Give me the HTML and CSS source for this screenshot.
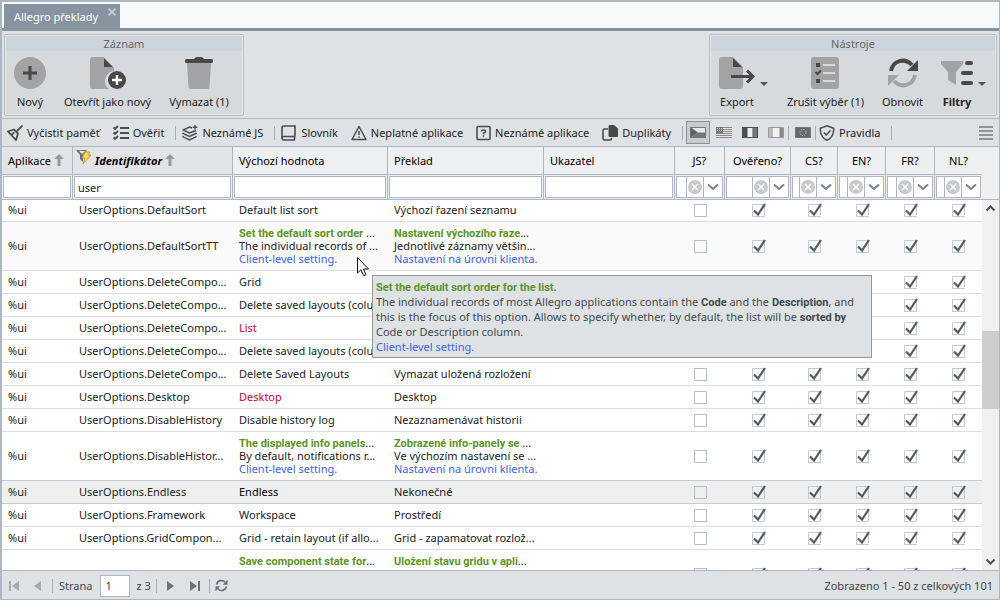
FILE: index.html
```html
<!DOCTYPE html>
<html lang="cs">
<head>
<meta charset="utf-8">
<title>Allegro překlady</title>
<link rel="stylesheet" href="styles.css">
</head>
<body>
<svg class="defs" aria-hidden="true">
  <symbol id="clear" viewBox="0 0 14 14"><circle cx="7" cy="7" r="7" fill="#c9c9c9"/><path d="M4 4l6 6M10 4l-6 6" stroke="#fff" stroke-width="1.3"/></symbol>
  <symbol id="chevron" viewBox="0 0 12 8"><path d="M1 1.500l5 4.500 5-4.500" fill="none" stroke="#7b8188" stroke-width="2"/></symbol>
  <symbol id="sort" viewBox="0 0 10 12"><path d="M5 0l5 5H6.500v7h-3V5H0z" fill="#999"/></symbol>
</svg>
<div class="app">
  <nav class="tabs">
    <div class="tab"><a href="#prehled">Allegro překlady</a>
      <button class="tab-close" aria-label="Zavřít"><svg width="8" height="8" viewBox="0 0 8 8"><path d="M.5.500l7 7M7.500.500l-7 7" stroke="#ccd3da" stroke-width="1.600"/></svg></button>
    </div>
  </nav>

  <header class="ribbon">
    <section class="group">
      <h2>Záznam</h2>
      <div class="group-items">
        <button class="big"><svg width="32" height="32" viewBox="0 0 32 32"><circle cx="16" cy="16" r="16" fill="#a2a3a4"/><path d="M16 9v14M9 16h14" stroke="#484848" stroke-width="3"/></svg><span>Nový</span></button>
        <button class="big"><svg width="36" height="32" viewBox="0 0 36 32"><path d="M3 0h11v10h10v4a10 10 0 0 0-5 18H3q-3 0-3-3V3q0-3 3-3z" fill="#a2a3a4"/><path d="M14 1l9 9h-9z" fill="#484848"/><circle cx="27" cy="23" r="9" fill="#484848"/><path d="M27 18v10M22 23h10" stroke="#fff" stroke-width="2.400"/></svg><span>Otevřít jako nový</span></button>
        <button class="big"><svg width="28" height="32" viewBox="0 0 28 32"><path d="M2 6h24l-1.500 24q-.2 2-2 2h-17q-1.800 0-2-2z" fill="#a2a3a4"/><path d="M1 2h8q1-2 3-2h4q2 0 3 2h8q1 0 1 2t-1 2H1Q0 6 0 4t1-2z" fill="#484848"/></svg><span>Vymazat (1)</span></button>
      </div>
    </section>
    <section class="group">
      <h2>Nástroje</h2>
      <div class="group-items">
        <button class="big menu"><svg width="36" height="32" viewBox="0 0 36 32"><path d="M3 0h11l10 10v19q0 3-3 3H3q-3 0-3-3V3q0-3 3-3z" fill="#a2a3a4"/><path d="M14 1l9 9h-9z" fill="#484848"/><path d="M12 19.500h21M28 13.500l6 6-6 6" fill="none" stroke="#484848" stroke-width="3"/></svg><span>Export</span></button>
        <button class="big"><svg width="28" height="32" viewBox="0 0 28 32"><rect width="28" height="32" rx="3" fill="#a2a3a4"/><path d="M12 8h12M12 16h12M12 24h12" stroke="#d7dadd" stroke-width="2"/><path d="M5 6h4v4H5zM5 22h4v4H5z" fill="#484848"/><path d="M4.500 15l2 2 3.500-3.500" fill="none" stroke="#484848" stroke-width="2"/></svg><span>Zrušit výběr (1)</span></button>
        <button class="big"><svg width="32" height="32" viewBox="0 0 32 32"><path d="M4 14C6 3 18 .5 25 8" fill="none" stroke="#484848" stroke-width="4"/><path d="M31 3v11H20z" fill="#484848"/><path d="M28 18c-2 11-14 13.500-21 6" fill="none" stroke="#a2a3a4" stroke-width="4"/><path d="M1 29V18h11z" fill="#a2a3a4"/></svg><span>Obnovit</span></button>
        <button class="big menu bold"><svg width="32" height="32" viewBox="0 0 32 32"><path d="M0 4h22v3l-7 8v13l-8-5v-8L0 7z" fill="#a2a3a4"/><path d="M26 6h4M22 16h8M22 26h8" stroke="#484848" stroke-width="4" stroke-linecap="round"/></svg><span>Filtry</span></button>
      </div>
    </section>
  </header>

  <div class="toolbar">
    <button class="tool"><svg width="16" height="16" viewBox="0 0 16 16" fill="none" stroke="#4c4c4c" stroke-width="1.800"><path d="M15.500.500L10 6M1 6.500l6-2 4 4-2 6.500zM4.500 9.500l3-2"/></svg>Vyčistit paměť</button>
    <button class="tool"><svg width="16" height="16" viewBox="0 0 16 16" fill="none" stroke="#4c4c4c" stroke-width="1.800"><path d="M7 3h9M7 8h9M7 13h9M.5 2.500L2 4l3-3M.5 7.500L2 9l3-3M.5 12.500L2 14l3-3"/></svg>Ověřit</button>
    <i class="sep"></i>
    <button class="tool"><svg width="16" height="16" viewBox="0 0 16 16" fill="none" stroke="#4c4c4c" stroke-width="1.400"><path d="M10 3L7.500 2 1 5l6.500 3L14 5.500M1.500 8L1 8.500l6.500 3 6.500-3-.5-.5M1.500 11l-.5.800L7.500 15l6.500-3.200-.5-.800M13 0v4.500M10.800 2.300h4.500"/></svg>Neznámé JS</button>
    <i class="sep"></i>
    <button class="tool"><svg width="16" height="16" viewBox="0 0 16 16" fill="none" stroke="#4c4c4c" stroke-width="1.600"><path d="M14 11.500V1H3Q1 1 1 3v10q0 2 2 2h11M14 11.500H3q-2 0-2 1.500M13.500 11.500V15"/></svg>Slovník</button>
    <button class="tool"><svg width="16" height="16" viewBox="0 0 16 16" fill="none" stroke="#4c4c4c" stroke-width="1.500" stroke-linejoin="round"><path d="M8 1.500l7 13H1zM8 6v4M8 11.300v1.500"/></svg>Neplatné aplikace</button>
    <button class="tool"><svg width="15" height="16" viewBox="0 0 15 16" fill="none" stroke="#4c4c4c" stroke-width="1.600"><rect x="1" y="1.500" width="13" height="13" rx="1"/><path d="M5.500 6.500Q5.500 5 7.500 5t2 1.500Q9.500 7.500 7.500 8.300v1M7.500 10.300v1.500"/></svg>Neznámé aplikace</button>
    <button class="tool"><svg width="16" height="16" viewBox="0 0 16 16"><path d="M6 4H2.500Q1 4 1 5.500v8Q1 15 2.500 15H8q1.500 0 1.500-2" fill="none" stroke="#4c4c4c" stroke-width="1.600"/><path d="M8 0h4l4 3.500V11q0 1-1 1H8q-1.500 0-1.500-1V1.500Q6.500 0 8 0z" fill="#484848"/></svg>Duplikáty</button>
    <i class="sep"></i>
    <button class="flag on" aria-label="Čeština" aria-pressed="true"><svg width="16" height="11" viewBox="0 0 16 11"><path d="M0 0h16v6H8z" fill="#e8e8e8"/><path d="M0 0l8 5.500L0 11z" fill="#606060"/><path d="M0 11l8-5.500h8V11z" fill="#777"/><path d="M.5.500h15v10H.5z" fill="none" stroke="#777"/></svg></button>
    <button class="flag" aria-label="Angličtina"><svg width="16" height="11" viewBox="0 0 16 11"><path d="M0 0h16v11H0z" fill="#e8e8e8"/><path d="M0 .5h16M0 2.500h16M0 4.500h16M0 6.500h16M0 8.500h16M0 10.500h16" stroke="#888"/><path d="M0 0h7v6H0z" fill="#777"/><path d="M1 1.500h6M1 3.500h6" stroke="#ccc" stroke-dasharray="1 1"/></svg></button>
    <button class="flag" aria-label="Francouzština"><svg width="16" height="11" viewBox="0 0 16 11"><path d="M0 0h16v11H0z" fill="#4f4f4f"/><path d="M5.500 1h5v9h-5z" fill="#eee"/><path d="M11 1h4v9h-4z" fill="#777"/></svg></button>
    <button class="flag" aria-label="Nizozemština"><svg width="16" height="11" viewBox="0 0 16 11"><path d="M.5.500h15v10H.5z" fill="#bbb" stroke="#999"/><path d="M5 1h6v9H5z" fill="#f2f2f2"/><path d="M12 1h3v9h-3z" fill="#888"/></svg></button>
    <i class="sep flag-sep"></i>
    <button class="flag" aria-label="Evropská unie"><svg width="16" height="11" viewBox="0 0 16 11"><path d="M.5.500h15v10H.5z" fill="#686868" stroke="#777"/><circle cx="8" cy="5.500" r="3" fill="none" stroke="#ddd" stroke-dasharray="1 1.350"/></svg></button>
    <i class="sep flag-sep"></i>
    <button class="tool"><svg width="16" height="16" viewBox="0 0 16 16" fill="none" stroke="#4c4c4c" stroke-width="1.500"><path d="M8 .8l6.700 2.500q.3 9-6.700 12-7-3-6.700-12zM4.800 7.500L7.200 10l4.300-4.500"/></svg>Pravidla</button>
    <i class="sep"></i>
    <button class="more" aria-label="Nabídka"><svg width="14" height="14" viewBox="0 0 14 14"><path d="M0 1h14M0 5h14M0 9h14M0 13h14" stroke="#929292" stroke-width="2"/></svg></button>
  </div>

  <div class="grid-head">
    <table class="grid">
      <colgroup><col class="w-app"><col class="w-id"><col class="w-val"><col class="w-tr"><col><col class="w-js"><col class="w-ok"><col class="w-cs"><col class="w-en"><col class="w-fr"><col class="w-nl"></colgroup>
      <thead>
        <tr class="titles">
          <th class="sorted">Aplikace <svg class="arrow" width="10" height="12"><use href="#sort"/></svg></th>
          <th class="sorted ident"><svg class="funnel" width="16" height="16" viewBox="0 0 16 16"><path d="M0 1h11L7 6v7l-3-3V6z" fill="#65717c"/><path d="M3 2h6L6 5z" fill="#e9edf0"/><path d="M9 3h5l-2 3h3l-8 9 2-6H6z" fill="#ffd951" stroke="#c48b18" stroke-width=".8"/></svg><em>Identifikátor</em> <svg class="arrow" width="10" height="12"><use href="#sort"/></svg></th>
          <th>Výchozí hodnota</th><th>Překlad</th><th>Ukazatel</th>
          <th class="c">JS?</th><th class="c">Ověřeno?</th><th class="c">CS?</th><th class="c">EN?</th><th class="c">FR?</th><th class="c">NL?</th>
        </tr>
        <tr class="filters">
          <td><input class="box" aria-label="Filtr Aplikace"></td>
          <td><input class="box" aria-label="Filtr Identifikátor" value="user"></td>
          <td><input class="box" aria-label="Filtr Výchozí hodnota"></td>
          <td><input class="box" aria-label="Filtr Překlad"></td>
          <td><input class="box" aria-label="Filtr Ukazatel"></td>
          <td><div class="combo"><input aria-label="Filtr JS"><button aria-label="Vymazat filtr JS"><svg width="14" height="14"><use href="#clear"/></svg></button><button aria-label="Vybrat JS"><svg width="12" height="8"><use href="#chevron"/></svg></button></div></td>
          <td><div class="combo"><input aria-label="Filtr Ověřeno"><button aria-label="Vymazat filtr Ověřeno"><svg width="14" height="14"><use href="#clear"/></svg></button><button aria-label="Vybrat Ověřeno"><svg width="12" height="8"><use href="#chevron"/></svg></button></div></td>
          <td><div class="combo"><input aria-label="Filtr CS"><button aria-label="Vymazat filtr CS"><svg width="14" height="14"><use href="#clear"/></svg></button><button aria-label="Vybrat CS"><svg width="12" height="8"><use href="#chevron"/></svg></button></div></td>
          <td><div class="combo"><input aria-label="Filtr EN"><button aria-label="Vymazat filtr EN"><svg width="14" height="14"><use href="#clear"/></svg></button><button aria-label="Vybrat EN"><svg width="12" height="8"><use href="#chevron"/></svg></button></div></td>
          <td><div class="combo"><input aria-label="Filtr FR"><button aria-label="Vymazat filtr FR"><svg width="14" height="14"><use href="#clear"/></svg></button><button aria-label="Vybrat FR"><svg width="12" height="8"><use href="#chevron"/></svg></button></div></td>
          <td><div class="combo"><input aria-label="Filtr NL"><button aria-label="Vymazat filtr NL"><svg width="14" height="14"><use href="#clear"/></svg></button><button aria-label="Vybrat NL"><svg width="12" height="8"><use href="#chevron"/></svg></button></div></td>
        </tr>
      </thead>
    </table>
  </div>

  <main class="grid-body">
    <div class="rows">
    <table class="grid data">
      <colgroup><col class="w-app"><col class="w-id"><col class="w-val"><col class="w-tr"><col><col class="w-js"><col class="w-ok"><col class="w-cs"><col class="w-en"><col class="w-fr"><col class="w-nl"></colgroup>
      <tbody>
        <tr><td>%ui</td><td>UserOptions.DefaultSort</td><td>Default list sort</td><td>Výchozí řazení seznamu</td><td></td><td class="c"><input type="checkbox" aria-label="JS"></td><td class="c"><input type="checkbox" aria-label="Ověřeno" checked></td><td class="c"><input type="checkbox" aria-label="CS" checked></td><td class="c"><input type="checkbox" aria-label="EN" checked></td><td class="c"><input type="checkbox" aria-label="FR" checked></td><td class="c"><input type="checkbox" aria-label="NL" checked></td></tr>
        <tr class="tall hover"><td>%ui</td><td>UserOptions.DefaultSortTT</td><td><b>Set the default sort order</b> ...<br>The individual records of ...<br><span class="blue">Client-level setting.</span></td><td><b>Nastavení výchozího řaze</b>...<br>Jednotlivé záznamy většin...<br><span class="blue">Nastavení na úrovni klienta.</span></td><td></td><td class="c"><input type="checkbox" aria-label="JS"></td><td class="c"><input type="checkbox" aria-label="Ověřeno" checked></td><td class="c"><input type="checkbox" aria-label="CS" checked></td><td class="c"><input type="checkbox" aria-label="EN" checked></td><td class="c"><input type="checkbox" aria-label="FR" checked></td><td class="c"><input type="checkbox" aria-label="NL" checked></td></tr>
        <tr><td>%ui</td><td>UserOptions.DeleteCompo...</td><td>Grid</td><td></td><td></td><td class="c"></td><td class="c"></td><td class="c"></td><td class="c"></td><td class="c"><input type="checkbox" aria-label="FR" checked></td><td class="c"><input type="checkbox" aria-label="NL" checked></td></tr>
        <tr><td>%ui</td><td>UserOptions.DeleteCompo...</td><td>Delete saved layouts (colu</td><td></td><td></td><td class="c"></td><td class="c"></td><td class="c"></td><td class="c"></td><td class="c"><input type="checkbox" aria-label="FR" checked></td><td class="c"><input type="checkbox" aria-label="NL" checked></td></tr>
        <tr><td>%ui</td><td>UserOptions.DeleteCompo...</td><td class="red">List</td><td></td><td></td><td class="c"></td><td class="c"></td><td class="c"></td><td class="c"></td><td class="c"><input type="checkbox" aria-label="FR" checked></td><td class="c"><input type="checkbox" aria-label="NL" checked></td></tr>
        <tr><td>%ui</td><td>UserOptions.DeleteCompo...</td><td>Delete saved layouts (colu</td><td></td><td></td><td class="c"></td><td class="c"></td><td class="c"></td><td class="c"></td><td class="c"><input type="checkbox" aria-label="FR" checked></td><td class="c"><input type="checkbox" aria-label="NL" checked></td></tr>
        <tr><td>%ui</td><td>UserOptions.DeleteCompo...</td><td>Delete Saved Layouts</td><td>Vymazat uložená rozložení</td><td></td><td class="c"><input type="checkbox" aria-label="JS"></td><td class="c"><input type="checkbox" aria-label="Ověřeno" checked></td><td class="c"><input type="checkbox" aria-label="CS" checked></td><td class="c"><input type="checkbox" aria-label="EN" checked></td><td class="c"><input type="checkbox" aria-label="FR" checked></td><td class="c"><input type="checkbox" aria-label="NL" checked></td></tr>
        <tr><td>%ui</td><td>UserOptions.Desktop</td><td class="red">Desktop</td><td>Desktop</td><td></td><td class="c"><input type="checkbox" aria-label="JS"></td><td class="c"><input type="checkbox" aria-label="Ověřeno" checked></td><td class="c"><input type="checkbox" aria-label="CS" checked></td><td class="c"><input type="checkbox" aria-label="EN" checked></td><td class="c"><input type="checkbox" aria-label="FR" checked></td><td class="c"><input type="checkbox" aria-label="NL" checked></td></tr>
        <tr><td>%ui</td><td>UserOptions.DisableHistory</td><td>Disable history log</td><td>Nezaznamenávat historii</td><td></td><td class="c"><input type="checkbox" aria-label="JS"></td><td class="c"><input type="checkbox" aria-label="Ověřeno" checked></td><td class="c"><input type="checkbox" aria-label="CS" checked></td><td class="c"><input type="checkbox" aria-label="EN" checked></td><td class="c"><input type="checkbox" aria-label="FR" checked></td><td class="c"><input type="checkbox" aria-label="NL" checked></td></tr>
        <tr class="tall before-selected"><td>%ui</td><td>UserOptions.DisableHistor...</td><td><b>The displayed info panels</b>...<br>By default, notifications r...<br><span class="blue">Client-level setting.</span></td><td><b>Zobrazené info-panely se</b> ...<br>Ve výchozím nastavení se ...<br><span class="blue">Nastavení na úrovni klienta.</span></td><td></td><td class="c"><input type="checkbox" aria-label="JS"></td><td class="c"><input type="checkbox" aria-label="Ověřeno" checked></td><td class="c"><input type="checkbox" aria-label="CS" checked></td><td class="c"><input type="checkbox" aria-label="EN" checked></td><td class="c"><input type="checkbox" aria-label="FR" checked></td><td class="c"><input type="checkbox" aria-label="NL" checked></td></tr>
        <tr class="selected"><td>%ui</td><td>UserOptions.Endless</td><td class="black">Endless</td><td>Nekonečné</td><td></td><td class="c"><input type="checkbox" aria-label="JS"></td><td class="c"><input type="checkbox" aria-label="Ověřeno" checked></td><td class="c"><input type="checkbox" aria-label="CS" checked></td><td class="c"><input type="checkbox" aria-label="EN" checked></td><td class="c"><input type="checkbox" aria-label="FR" checked></td><td class="c"><input type="checkbox" aria-label="NL" checked></td></tr>
        <tr><td>%ui</td><td>UserOptions.Framework</td><td>Workspace</td><td>Prostředí</td><td></td><td class="c"><input type="checkbox" aria-label="JS"></td><td class="c"><input type="checkbox" aria-label="Ověřeno" checked></td><td class="c"><input type="checkbox" aria-label="CS" checked></td><td class="c"><input type="checkbox" aria-label="EN" checked></td><td class="c"><input type="checkbox" aria-label="FR" checked></td><td class="c"><input type="checkbox" aria-label="NL" checked></td></tr>
        <tr><td>%ui</td><td>UserOptions.GridCompon...</td><td>Grid - retain layout (if allo...</td><td>Grid - zapamatovat rozlož...</td><td></td><td class="c"><input type="checkbox" aria-label="JS"></td><td class="c"><input type="checkbox" aria-label="Ověřeno" checked></td><td class="c"><input type="checkbox" aria-label="CS" checked></td><td class="c"><input type="checkbox" aria-label="EN" checked></td><td class="c"><input type="checkbox" aria-label="FR" checked></td><td class="c"><input type="checkbox" aria-label="NL" checked></td></tr>
        <tr class="tall"><td></td><td></td><td><b>Save component state for</b>...</td><td><b>Uložení stavu gridu v apli</b>...</td><td></td><td class="c"><input type="checkbox" aria-label="JS"></td><td class="c"><input type="checkbox" aria-label="Ověřeno" checked></td><td class="c"><input type="checkbox" aria-label="CS" checked></td><td class="c"><input type="checkbox" aria-label="EN" checked></td><td class="c"><input type="checkbox" aria-label="FR" checked></td><td class="c"><input type="checkbox" aria-label="NL" checked></td></tr>
      </tbody>
    </table>
    </div>
    <div class="scrollbar" aria-hidden="true">
      <svg width="17" height="17" viewBox="0 0 17 17"><path d="M4.500 10.500l4-4 4 4" fill="none" stroke="#505050" stroke-width="2"/></svg>
      <div class="track"><div class="thumb"></div></div>
      <svg width="17" height="17" viewBox="0 0 17 17"><path d="M4.500 6.500l4 4 4-4" fill="none" stroke="#505050" stroke-width="2"/></svg>
    </div>
  </main>

  <footer class="pager">
    <button aria-label="První strana" disabled><svg width="10" height="10" viewBox="0 0 10 10"><path d="M1 0v10" stroke="#a5aaae" stroke-width="2"/><path d="M10 0v10L3 5z" fill="#a5aaae"/></svg></button>
    <button aria-label="Předchozí strana" disabled><svg width="10" height="10" viewBox="0 0 10 10"><path d="M8 0v10L1 5z" fill="#a5aaae"/></svg></button>
    <i class="sep"></i>
    <label for="page">Strana</label><input id="page" value="1"><span>z 3</span>
    <i class="sep"></i>
    <button aria-label="Další strana"><svg width="10" height="10" viewBox="0 0 10 10"><path d="M1 0v10l7-5z" fill="#6e7276"/></svg></button>
    <button aria-label="Poslední strana"><svg width="10" height="10" viewBox="0 0 10 10"><path d="M9 0v10" stroke="#6e7276" stroke-width="2"/><path d="M0 0v10l7-5z" fill="#6e7276"/></svg></button>
    <i class="sep"></i>
    <button class="reload" aria-label="Obnovit stránku"><svg width="13" height="13" viewBox="0 0 32 32"><path d="M4 14C6 3 18 .5 25 8M28 18c-2 11-14 13.500-21 6" fill="none" stroke="#6e7276" stroke-width="4"/><path d="M31 2v12H19zM1 30V18h12z" fill="#6e7276"/></svg></button>
    <span class="total">Zobrazeno 1 - 50 z celkových 101</span>
  </footer>
</div>

<div class="tooltip" role="tooltip"><b class="green">Set the default sort order for the list.</b><br>The individual records of most Allegro applications contain the <b>Code</b> and the <b>Description</b>, and this is the focus of this option. Allows to specify whether, by default, the list will be <b>sorted by</b> Code or Description column.<br><span class="blue">Client-level setting.</span></div>
<svg class="cursor" aria-hidden="true" width="13" height="20" viewBox="0 0 13 20"><path d="M.5.500v15.500l3.500-3.300 2.500 6 2.500-1-2.500-5.700h5z" fill="#fff" stroke="#111"/></svg>
</body>
</html>
```
FILE: styles.css
```css
* { box-sizing: border-box; }

body {
  margin: 0;
  font: 11px/14px "Noto Sans", "Open Sans", sans-serif;
  color: #222;
}

button {
  font: inherit;
  color: inherit;
  border: 0;
  padding: 0;
  background: none;
  white-space: nowrap;
}

input { font: inherit; color: inherit; }
svg { display: block; flex: none; }
b { font-family: Roboto, "Noto Sans", sans-serif; font-weight: 700; line-height: 1px; }
.defs { position: absolute; width: 0; height: 0; }

.app {
  height: 100vh;
  display: flex;
  flex-direction: column;
  background: #dfe2e5;
  border: solid #acb7c1;
  border-width: 2px 1px 1px 2px;
}

/* tabs */
.tabs {
  display: flex;
  flex: none;
  padding: 2px 2px 0;
  background: #f8faf9;
  border-bottom: 3px solid #8693a1;
}

.tab {
  display: flex;
  height: 24px;
  padding: 0 4px 0 10px;
  gap: 10px;
  background: #8693a1;
}

.tab a { color: #fff; text-decoration: none; line-height: 26px; }
.tab-close { height: 16px; }

/* ribbon */
.ribbon {
  display: flex;
  flex: none;
  justify-content: space-between;
  padding: 3px 2px 2px;
  border-bottom: 1px solid #acb7c1;
}

.group {
  padding: 1px;
  background: #d7dadd;
  border: 1px solid #bdbdbd;
  border-radius: 2px;
  box-shadow: inset 0 0 0 1px #e6e6e6;
}

.group h2 {
  margin: 0;
  height: 15px;
  font: inherit;
  line-height: 16px;
  text-align: center;
  color: #666;
  background: #ccd4dd;
}

.group-items { display: flex; gap: 2px; padding-right: 5px; }

.big {
  display: flex;
  flex-direction: column;
  align-items: center;
  gap: 6px;
  height: 63px;
  padding: 6px 8px 0;
}

.menu { position: relative; margin-right: 14px; }

.menu::after {
  content: "";
  position: absolute;
  right: -5px;
  top: 31px;
  border: solid transparent;
  border-width: 4px 4px 0;
  border-top-color: #555;
}

.bold { margin-right: 9px; font-weight: bold; }

/* toolbar */
.toolbar {
  display: flex;
  flex: none;
  align-items: center;
  height: 28px;
  border-bottom: 1px solid #acb7c1;
}

.tool {
  display: flex;
  align-items: center;
  gap: 4px;
  padding: 0 8px 0 5px;
}

.sep {
  flex: none;
  width: 1px;
  height: 14px;
  margin: 0 1px 0 3px;
  background: #9fb0bf;
}

.flag { padding: 5px 3px; margin-left: 2px; border: 1px solid transparent; }
.flag.on { height: 23px; border-color: #8f8f8f; background: #c9cccf; }
.flag-sep { margin: 0; }
.flag-sep + .tool { padding-left: 3px; }
.more { margin-left: auto; padding-right: 6px; }

/* grid */
.grid {
  width: 100%;
  table-layout: fixed;
  border-collapse: separate;
  border-spacing: 0;
}

.w-app { width: 71px; }
.w-id { width: 160px; }
.w-val { width: 155px; }
.w-tr { width: 156px; }
.w-js { width: 50px; }
.w-ok { width: 66px; }
.w-cs { width: 47px; }
.w-en { width: 48px; }
.w-fr { width: 49px; }
.w-nl { width: 47px; }

.grid-head {
  flex: none;
  padding-right: 17px;
  background: #eeeff1;
  border-bottom: 1px solid #acb7c1;
}

.titles th {
  height: 28px;
  padding: 0 0 0 6px;
  font-weight: normal;
  text-align: left;
  color: #000;
  white-space: nowrap;
  border-right: 1px solid #acb7c1;
  border-bottom: 1px solid #acb7c1;
}

.titles th:last-child { border-right: 0; }
.titles .c { padding: 0; text-align: center; }
.titles .sorted { background: #e3e4e8; }
.ident em { font-weight: bold; }
.arrow { display: inline-block; vertical-align: -1px; }
.titles .ident { padding-left: 3px; }
.funnel { display: inline-block; margin: -5px 3px 0 0; vertical-align: 0; }

.filters td {
  height: 24px;
  padding: 1px;
  border-right: 1px solid #acb7c1;
}

.filters td:last-child { border-right: 0; }

.box, .combo {
  display: flex;
  width: 100%;
  height: 22px;
  padding: 0 3px;
  background: #fff;
  border: 1px solid #b0b4c8;
}

.combo { padding: 0; }
.combo input { flex: 1; min-width: 0; width: 0; padding: 0; border: 0; }

.combo button {
  display: flex;
  align-items: center;
  justify-content: center;
  width: 17px;
  border-left: 1px solid #b0b4c8;
}

.combo button:last-child { width: 19px; }

.grid-body {
  display: flex;
  flex: 1;
  min-height: 0;
  background: #fff;
}

.rows { flex: 1; min-width: 0; overflow: hidden; }

.data td {
  height: 23px;
  padding: 0 0 2px 6px;
  line-height: 13px;
  white-space: nowrap;
  border-bottom: 1px solid #dcdee2;
}

.data .tall td { height: 49px; }
.data tr:last-child td:nth-child(3),
.data tr:last-child td:nth-child(4) { vertical-align: top; padding-top: 4px; }
.data tr:first-child td { height: 22px; }
.data .hover td { background: #fafafa; }
.data .selected td { background: #eef0ef; }
.data .selected td, .data .before-selected td { border-bottom-color: #c5cbd1; }
.data tr td.c { padding: 0; text-align: center; }
.data b, .green { color: #5c9427; }
.blue { color: #3d65dc; }
.data .red { color: #cc0033; }
.data .black { color: #000; }

.data input {
  appearance: none;
  display: block;
  width: 15px;
  height: 15px;
  margin: 0 auto;
  background: url("data:image/svg+xml,%3Csvg xmlns='http://www.w3.org/2000/svg' width='15' height='15'%3E%3Cpath d='M1.500 1.500h12v12h-12z' fill='none' stroke='%23b5bdc6'/%3E%3C/svg%3E");
}

.data input:checked {
  background: url("data:image/svg+xml,%3Csvg xmlns='http://www.w3.org/2000/svg' width='15' height='15'%3E%3Cpath d='M1.500 1.500h12v12h-12z' fill='none' stroke='%23c3cad1'/%3E%3Cpath d='M3 7.500l4 4L14 1' fill='none' stroke='%23505a66' stroke-width='2.200'/%3E%3C/svg%3E");
}

.scrollbar {
  display: flex;
  flex: none;
  flex-direction: column;
  width: 17px;
  background: #f0f0f0;
}

.track { flex: 1; padding-top: 114px; }
.thumb { height: 78px; background: #cdcdcd; }

/* pager */
.pager {
  display: flex;
  flex: none;
  align-items: center;
  height: 29px;
  padding: 1px 6px 0 2px;
  color: #444;
  border-top: 1px solid #acb7c1;
}

.pager button { padding: 0 5px; margin-right: 4px; }
.pager .sep { margin: 0 4px 0 0; }
.pager label { margin-left: 2px; }
.pager input {
  width: 30px;
  height: 22px;
  margin: 0 6px 0 8px;
  padding: 0 4px;
  border: 1px solid #b0b4c8;
}

.pager span { margin-right: 5px; }
.pager .reload { padding: 0 1px; }
.pager .total { margin: 0 0 0 auto; }

/* overlays */
.tooltip {
  position: absolute;
  left: 372px;
  top: 275px;
  width: 500px;
  padding: 3px;
  line-height: 15px;
  color: #3f4a4c;
  background: #dfe2e5;
  border: 1px solid #979797;
}

.cursor { position: absolute; left: 357px; top: 257px; }
```
